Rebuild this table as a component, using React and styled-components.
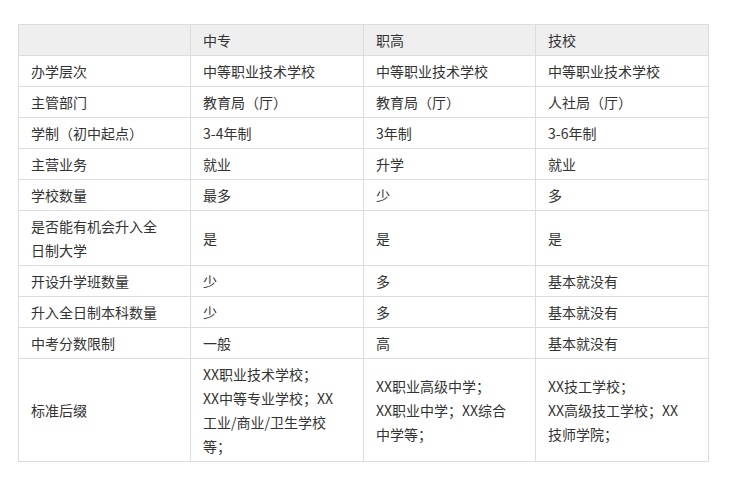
import React from "react";
import styled, { createGlobalStyle } from "styled-components";

const Global = createGlobalStyle`
  html, body { margin: 0; padding: 0; background: #fff; }
  body { font-family: "Microsoft YaHei", "Noto Sans CJK SC", "Noto Sans", sans-serif; }
`;

const Page = styled.div`
  padding: 24px 0 0 18px;
`;

const Table = styled.table`
  border-collapse: collapse;
  table-layout: fixed;
  width: 690px;
  font-size: 14px;
  color: #333;
`;

const Col = styled.col`
  width: ${(p) => p.$w}px;
`;

const HeadRow = styled.tr`
  background: #efefef;
`;

const Cell = styled.td`
  border: 1px solid #dcdcdc;
  padding: 3px 12px;
  line-height: 24px;
  height: 24px;
  vertical-align: middle;
  text-align: left;
  font-weight: normal;
  word-break: break-all;
`;

const rows = [
  ["办学层次", "中等职业技术学校", "中等职业技术学校", "中等职业技术学校"],
  ["主管部门", "教育局（厅）", "教育局（厅）", "人社局（厅）"],
  ["学制（初中起点）", "3-4年制", "3年制", "3-6年制"],
  ["主营业务", "就业", "升学", "就业"],
  ["学校数量", "最多", "少", "多"],
  [["是否能有机会升入全", "日制大学"], "是", "是", "是"],
  ["开设升学班数量", "少", "多", "基本就没有"],
  ["升入全日制本科数量", "少", "多", "基本就没有"],
  ["中考分数限制", "一般", "高", "基本就没有"],
  [
    "标准后缀",
    ["XX职业技术学校；", "XX中等专业学校；XX", "工业/商业/卫生学校", "等；"],
    ["XX职业高级中学；", "XX职业中学；XX综合", "中学等；"],
    ["XX技工学校；", "XX高级技工学校；XX", "技师学院；"],
  ],
];

const Lines = ({ v }) =>
  Array.isArray(v)
    ? v.map((l, i) => (
        <React.Fragment key={i}>
          {l}
          {i < v.length - 1 && <br />}
        </React.Fragment>
      ))
    : v;

export default function App() {
  return (
    <>
      <Global />
      <Page>
        <Table>
          <colgroup>
            <Col $w={172} />
            <Col $w={173} />
            <Col $w={172} />
            <Col $w={173} />
          </colgroup>
          <thead>
            <HeadRow>
              <Cell as="th"></Cell>
              <Cell as="th">中专</Cell>
              <Cell as="th">职高</Cell>
              <Cell as="th">技校</Cell>
            </HeadRow>
          </thead>
          <tbody>
            {rows.map((r, i) => (
              <tr key={i}>
                {r.map((c, j) => (
                  <Cell key={j}>
                    <Lines v={c} />
                  </Cell>
                ))}
              </tr>
            ))}
          </tbody>
        </Table>
      </Page>
    </>
  );
}
